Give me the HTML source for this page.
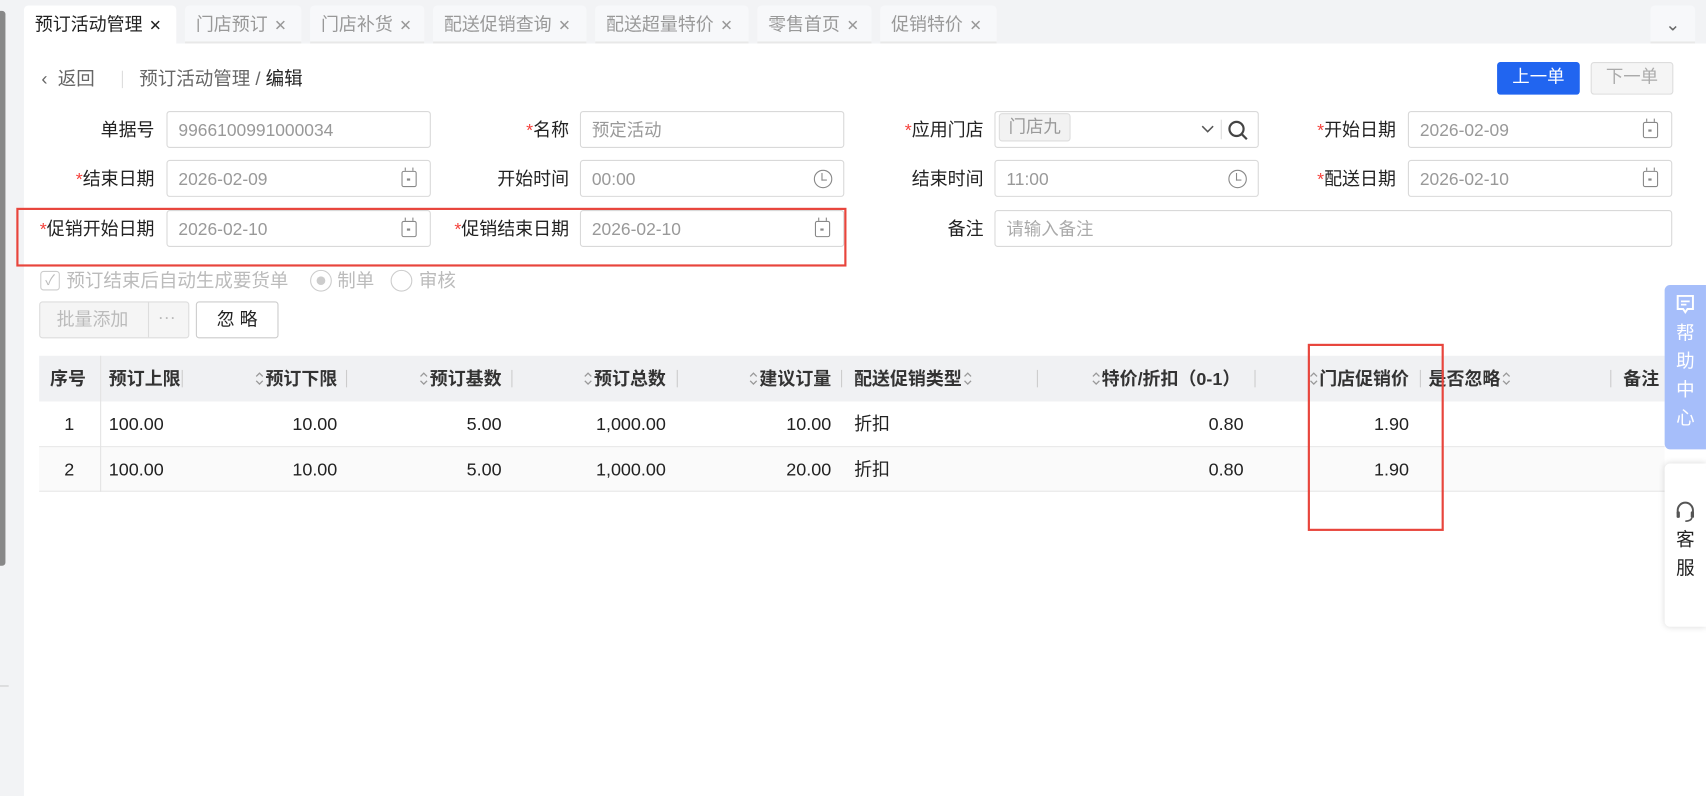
<!DOCTYPE html>
<html><head><meta charset="utf-8"><style>
*{box-sizing:border-box;margin:0;padding:0}
html,body{width:1706px;height:796px;overflow:hidden;background:#fff}
body{font-family:"Liberation Sans","Noto Sans CJK SC",sans-serif;color:#222}
#w{position:absolute;left:0;top:0;width:1568px;height:732px;transform:scale(1.088);transform-origin:0 0;background:#f2f3f5}
.a{position:absolute}
.main{left:22px;top:40px;width:1546px;height:692px;background:#fff}
.tab{position:absolute;top:5px;height:35px;background:#f7f8fa;color:#999;font-size:16.5px;line-height:36px;padding-left:10px;border-radius:4px 4px 0 0;border-bottom:2px solid #e8e8e8}
.tab b{font-weight:normal;font-size:14px;margin-left:6px}
.lbl{position:absolute;font-size:16.5px;text-align:right;width:140px;line-height:36px;color:#222}
.lbl i{color:#f5413b;font-style:normal}
.inp{position:absolute;height:34px;border:1px solid #d9d9d9;border-radius:3px;font-size:16px;color:#999;line-height:36px;padding-left:10px}
.cal{position:absolute;right:12px;top:9px;width:14px;height:15px;border:1.5px solid #888;border-radius:2px}
.cal:before{content:"";position:absolute;left:2px;top:-4px;width:6px;height:3px;border-left:1.5px solid #888;border-right:1.5px solid #888}
.cal:after{content:"";position:absolute;left:4px;top:6px;width:3px;height:2px;background:#888}
.clk{position:absolute;right:10px;top:8px;width:17px;height:17px;border:1.5px solid #888;border-radius:50%}
.clk:after{content:"";position:absolute;left:6px;top:2px;width:4px;height:6px;border-left:1.5px solid #888;border-bottom:1.5px solid #888}
.th{position:absolute;top:327px;height:42px;line-height:44px;font-size:16.5px;font-weight:bold;color:#333;white-space:nowrap}
.sep{position:absolute;top:340px;width:1px;height:16px;background:#ccc}
.td{position:absolute;font-size:16.5px;line-height:43px;color:#222}
.so{display:inline-block;width:9px;height:14px;vertical-align:-1px;margin:0 1px}
</style></head><body><div id="w">
<svg width="0" height="0" style="position:absolute"><defs><symbol id="s" viewBox="0 0 9 14"><path d="M1.5 5 L4.5 2 L7.5 5 M1.5 9 L4.5 12 L7.5 9" fill="none" stroke="#999" stroke-width="1.2"/></symbol></defs></svg>
<div class="a" style="left:0;top:10px;width:5px;height:510px;background:#888;border-radius:0 3px 3px 0"></div>
<div class="a" style="left:0;top:630px;width:8px;height:1px;background:#ccc"></div>
<div class="a main"></div>
<div class="tab" style="left:22px;width:140px;background:#fff;color:#222;border-bottom:none">预订活动管理<b style="color:#222">✕</b></div>
<div class="tab" style="left:170px;width:107px">门店预订<b>✕</b></div>
<div class="tab" style="left:285px;width:105px">门店补货<b>✕</b></div>
<div class="tab" style="left:398px;width:141px">配送促销查询<b>✕</b></div>
<div class="tab" style="left:547px;width:141px">配送超量特价<b>✕</b></div>
<div class="tab" style="left:696px;width:105px">零售首页<b>✕</b></div>
<div class="tab" style="left:809px;width:107px">促销特价<b>✕</b></div>
<div class="tab" style="left:1517px;width:41px;padding:0;text-align:center;color:#666">⌄</div>

<div class="a" style="left:38px;top:61px;font-size:17px;line-height:24px;color:#666">‹&nbsp; 返回</div>
<div class="a" style="left:112px;top:65px;width:1px;height:16px;background:#ddd"></div>
<div class="a" style="left:128px;top:61px;font-size:17px;line-height:24px;color:#666">预订活动管理 / <span style="color:#222">编辑</span></div>
<div class="a" style="left:1376px;top:57px;width:76px;height:30px;background:#2165f0;color:#fff;border-radius:3px;text-align:center;line-height:30px;font-size:16px">上一单</div>
<div class="a" style="left:1462px;top:57px;width:76px;height:30px;background:#f5f5f5;border:1px solid #ddd;color:#aaa;border-radius:3px;text-align:center;line-height:28px;font-size:16px">下一单</div>

<div class="lbl" style="left:2px;top:102px">单据号</div>
<div class="inp" style="left:153px;top:102px;width:243px">9966100991000034</div>
<div class="lbl" style="left:383px;top:102px"><i>*</i>名称</div>
<div class="inp" style="left:533px;top:102px;width:243px">预定活动</div>
<div class="lbl" style="left:764px;top:102px"><i>*</i>应用门店</div>
<div class="inp" style="left:914px;top:102px;width:243px;padding-left:3px;line-height:32px"><span style="display:inline-block;background:#f2f2f2;border:1px solid #ddd;border-radius:3px;height:26px;line-height:26px;padding:0 8px;vertical-align:1px">门店九</span><svg style="position:absolute;right:40px;top:11px" width="12" height="10"><path d="M1 2 L6 7 L11 2" fill="none" stroke="#555" stroke-width="1.4"/></svg><span style="position:absolute;right:33px;top:7px;width:1px;height:18px;background:#ddd"></span><svg style="position:absolute;right:8px;top:7px" width="20" height="20"><circle cx="8.5" cy="8.5" r="6.5" fill="none" stroke="#444" stroke-width="2"/><path d="M13 13 L18 18" stroke="#444" stroke-width="2"/></svg></div>
<div class="lbl" style="left:1143px;top:102px"><i>*</i>开始日期</div>
<div class="inp" style="left:1294px;top:102px;width:243px">2026-02-09<span class="cal"></span></div>

<div class="lbl" style="left:2px;top:147px"><i>*</i>结束日期</div>
<div class="inp" style="left:153px;top:147px;width:243px">2026-02-09<span class="cal"></span></div>
<div class="lbl" style="left:383px;top:147px">开始时间</div>
<div class="inp" style="left:533px;top:147px;width:243px">00:00<span class="clk"></span></div>
<div class="lbl" style="left:764px;top:147px">结束时间</div>
<div class="inp" style="left:914px;top:147px;width:243px">11:00<span class="clk"></span></div>
<div class="lbl" style="left:1143px;top:147px"><i>*</i>配送日期</div>
<div class="inp" style="left:1294px;top:147px;width:243px">2026-02-10<span class="cal"></span></div>

<div class="lbl" style="left:2px;top:193px"><i>*</i>促销开始日期</div>
<div class="inp" style="left:153px;top:193px;width:243px">2026-02-10<span class="cal"></span></div>
<div class="lbl" style="left:383px;top:193px"><i>*</i>促销结束日期</div>
<div class="inp" style="left:533px;top:193px;width:243px">2026-02-10<span class="cal"></span></div>
<div class="lbl" style="left:764px;top:193px">备注</div>
<div class="inp" style="left:914px;top:193px;width:623px;color:#aaa">请输入备注</div>
<div class="a" style="left:15px;top:191px;width:763px;height:54px;border:2px solid #e8453c"></div>

<div class="a" style="left:37px;top:249px;width:18px;height:18px;border:1px solid #ccc;border-radius:3px;color:#bbb;font-size:13px;text-align:center;line-height:16px">✓</div>
<div class="a" style="left:61px;top:247px;font-size:17px;color:#bbb;line-height:24px">预订结束后自动生成要货单</div>
<div class="a" style="left:285px;top:248px;width:20px;height:20px;border:1px solid #ccc;border-radius:50%"><span style="position:absolute;left:5px;top:5px;width:8px;height:8px;border-radius:50%;background:#ccc"></span></div>
<div class="a" style="left:310px;top:247px;font-size:17px;color:#bbb;line-height:24px">制单</div>
<div class="a" style="left:359px;top:248px;width:20px;height:20px;border:1px solid #ccc;border-radius:50%"></div>
<div class="a" style="left:385px;top:247px;font-size:17px;color:#bbb;line-height:24px">审核</div>

<div class="a" style="left:36px;top:277px;width:138px;height:34px;border:1px solid #ddd;background:#f5f5f5;border-radius:3px;color:#bbb;font-size:16.5px;line-height:33px"><span style="position:absolute;left:15px">批量添加</span><span style="position:absolute;left:99px;top:0;width:1px;height:32px;background:#ddd"></span><span style="position:absolute;left:108px;top:-2px">···</span></div>
<div class="a" style="left:180px;top:277px;width:76px;height:34px;border:1px solid #ccc;border-radius:3px;font-size:16.5px;line-height:33px;text-align:center">忽 略</div>

<div class="a" style="left:36px;top:327px;width:1494px;height:42px;background:#f0f1f3"></div>
<div class="a" style="left:36px;top:410px;width:1494px;height:42px;background:#fafafa;border-top:1px solid #e8e8e8;border-bottom:1px solid #e8e8e8"></div>
<div class="a" style="left:92px;top:327px;width:1px;height:125px;background:#e3e3e3"></div>
<div class="th" style="left:46px">序号</div>
<div class="th" style="left:93px;width:73px;overflow:hidden"><span style="position:absolute;right:0">预订上限</span></div>
<div class="th" style="left:170px;width:140px;text-align:right"><svg class="so"><use href="#s"/></svg>预订下限</div>
<div class="th" style="left:321px;width:140px;text-align:right"><svg class="so"><use href="#s"/></svg>预订基数</div>
<div class="th" style="left:472px;width:140px;text-align:right"><svg class="so"><use href="#s"/></svg>预订总数</div>
<div class="th" style="left:624px;width:140px;text-align:right"><svg class="so"><use href="#s"/></svg>建议订量</div>
<div class="th" style="left:785px">配送促销类型<svg class="so"><use href="#s"/></svg></div>
<div class="th" style="left:960px;width:180px;text-align:right"><svg class="so"><use href="#s"/></svg>特价/折扣（0-1）</div>
<div class="th" style="left:1160px;width:135px;text-align:right"><svg class="so"><use href="#s"/></svg>门店促销价</div>
<div class="th" style="left:1313px">是否忽略<svg class="so"><use href="#s"/></svg></div>
<div class="th" style="left:1492px">备注</div>
<div class="sep" style="left:167px"></div><div class="sep" style="left:318px"></div><div class="sep" style="left:470px"></div><div class="sep" style="left:622px"></div><div class="sep" style="left:773px"></div><div class="sep" style="left:953px"></div><div class="sep" style="left:1153px"></div><div class="sep" style="left:1305px"></div><div class="sep" style="left:1480px"></div>

<div class="td" style="left:59px;top:369px">1</div>
<div class="td" style="left:100px;top:369px">100.00</div>
<div class="td" style="left:210px;top:369px;width:100px;text-align:right">10.00</div>
<div class="td" style="left:361px;top:369px;width:100px;text-align:right">5.00</div>
<div class="td" style="left:512px;top:369px;width:100px;text-align:right">1,000.00</div>
<div class="td" style="left:664px;top:369px;width:100px;text-align:right">10.00</div>
<div class="td" style="left:785px;top:369px">折扣</div>
<div class="td" style="left:1043px;top:369px;width:100px;text-align:right">0.80</div>
<div class="td" style="left:1195px;top:369px;width:100px;text-align:right">1.90</div>

<div class="td" style="left:59px;top:411px">2</div>
<div class="td" style="left:100px;top:411px">100.00</div>
<div class="td" style="left:210px;top:411px;width:100px;text-align:right">10.00</div>
<div class="td" style="left:361px;top:411px;width:100px;text-align:right">5.00</div>
<div class="td" style="left:512px;top:411px;width:100px;text-align:right">1,000.00</div>
<div class="td" style="left:664px;top:411px;width:100px;text-align:right">20.00</div>
<div class="td" style="left:785px;top:411px">折扣</div>
<div class="td" style="left:1043px;top:411px;width:100px;text-align:right">0.80</div>
<div class="td" style="left:1195px;top:411px;width:100px;text-align:right">1.90</div>
<div class="a" style="left:1202px;top:316px;width:125px;height:172px;border:2px solid #e8453c"></div>

<div class="a" style="left:1530px;top:262px;width:38px;height:151px;background:#a6befa;border-radius:5px 0 0 5px;color:#fff;text-align:center;font-size:17px;line-height:26px;padding-top:8px">
<svg width="18" height="20" style="display:block;margin:0 auto 4px"><path d="M2 2 H16 V14 H11 L9 17 L7 14 H2 Z" fill="none" stroke="#fff" stroke-width="1.8"/><path d="M5 7 H13 M5 10 H10" stroke="#fff" stroke-width="1.6"/></svg>帮<br>助<br>中<br>心</div>
<div class="a" style="left:1530px;top:426px;width:38px;height:150px;background:#fff;border-radius:5px 0 0 5px;box-shadow:0 0 6px rgba(0,0,0,.15);text-align:center;font-size:17px;line-height:26px;padding-top:34px">
<svg width="20" height="22" style="display:block;margin:0 auto 2px"><path d="M3 12 V9 A7 7 0 0 1 17 9 V12" fill="none" stroke="#555" stroke-width="1.8"/><rect x="2" y="10" width="3" height="6" rx="1" fill="#555"/><rect x="15" y="10" width="3" height="6" rx="1" fill="#555"/><path d="M16 16 Q15 19 10 19" fill="none" stroke="#555" stroke-width="1.5"/></svg>客<br>服</div>
</div></body></html>
